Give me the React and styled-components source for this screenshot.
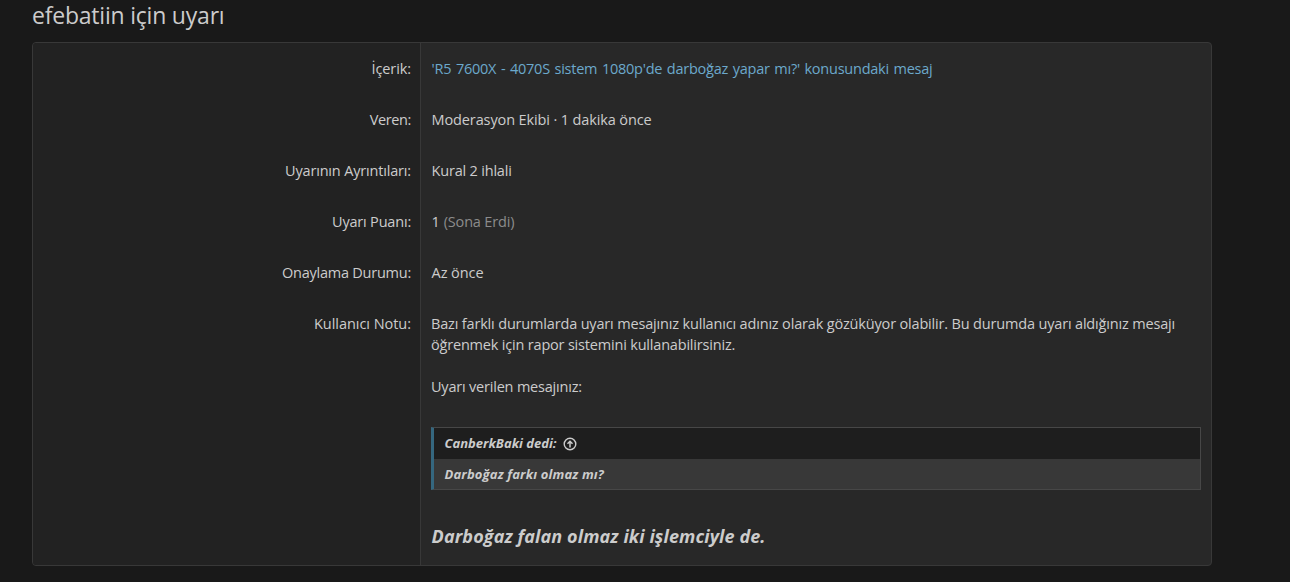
import styled, { createGlobalStyle } from "styled-components"

const GlobalStyle = createGlobalStyle`
  * {
    box-sizing: border-box;
  }
  body {
    margin: 0;
    background-color: #191919;
    color: #cccccc;
    font-family: "Segoe UI", "Open Sans", "Noto Sans", sans-serif;
    font-size: 14.5px;
    line-height: 21px;
  }
`

const Page = styled.main`
  width: 1290px;
  height: 582px;
  padding: 0 78px 0 32px;
  overflow: hidden;
`

const Title = styled.h1`
  height: 42px;
  margin: 0;
  font-size: 23px;
  font-weight: 400;
  line-height: 31px;
  letter-spacing: -0.21px;
`

const Block = styled.div`
  height: 524px;
  border: 1px solid #383838;
  border-radius: 4px;
  background-color: #282828;
  overflow: hidden;
`

const Pair = styled.dl`
  display: grid;
  grid-template-columns: 388px 1fr;
  margin: 0;
`

const Label = styled.dt`
  padding: 15px 9px 15px 15px;
  border-right: 1px solid #383838;
  background-color: #222222;
  text-align: right;
`

const Value = styled.dd`
  margin: 0;
  padding: 15px 10px;
`

const Line = styled.div`
  padding-left: 0.6px;
`

const Text = styled.span`
  letter-spacing: ${({ $spacing }) => $spacing || 0}px;
  white-space: nowrap;
`

const Muted = styled(Text)`
  color: #8c8c8c;
`

const Link = styled.a`
  color: #6ca9cc;
  letter-spacing: -0.24px;
  word-spacing: 1.1px;
  text-decoration: none;
`

const Note = styled.p`
  display: flex;
  flex-direction: column;
  margin: 0 0 21px;
`

const Quote = styled.blockquote`
  margin: 30px 0 32px;
  border: 1px solid #474747;
  border-left: 3px solid #35677f;
  background-color: #383838;
  font-size: 13px;
  font-style: italic;
  font-weight: 700;
`

const QuoteTitle = styled.div`
  display: flex;
  align-items: center;
  gap: 6px;
  height: 31px;
  padding: 0 10.5px;
  background-color: #1e1e1e;
`

const QuoteBody = styled.div`
  height: 30px;
  padding: 0 10.5px;
  line-height: 30px;
`

const Reply = styled.div`
  height: 29px;
  padding-left: 0.6px;
  font-size: 18px;
  font-style: italic;
  font-weight: 700;
  line-height: 28px;
`

function JumpIcon() {
  return (
    <svg width="14" height="14" viewBox="0 0 14 14" fill="none" stroke="#cccccc" strokeWidth="1.4">
      <circle cx="7" cy="7" r="5.8" />
      <path d="M7 10.4V4.4M4.5 6.7L7 4.2L9.5 6.7" strokeWidth="1.5" />
    </svg>
  )
}

function Row({ label, spacing, children }) {
  return (
    <Pair>
      <Label>
        <Text $spacing={spacing}>{label}</Text>
      </Label>
      <Value>{children}</Value>
    </Pair>
  )
}

function App() {
  return (
    <Page>
      <GlobalStyle />
      <Title>efebatiin için uyarı</Title>
      <Block>
        <Row label="İçerik:" spacing={-0.09}>
          <Line>
            <Link>'R5 7600X - 4070S sistem 1080p'de darboğaz yapar mı?' konusundaki mesaj</Link>
          </Line>
        </Row>
        <Row label="Veren:" spacing={-0.4}>
          <Line>
            <Text $spacing={-0.125}>Moderasyon Ekibi · 1 dakika önce</Text>
          </Line>
        </Row>
        <Row label="Uyarının Ayrıntıları:" spacing={-0.17}>
          <Line>
            <Text $spacing={-0.2}>Kural 2 ihlali</Text>
          </Line>
        </Row>
        <Row label="Uyarı Puanı:" spacing={-0.19}>
          <Line>
            1 <Muted $spacing={-0.16}>(Sona Erdi)</Muted>
          </Line>
        </Row>
        <Row label="Onaylama Durumu:" spacing={-0.24}>
          <Line>
            <Text $spacing={-0.07}>Az önce</Text>
          </Line>
        </Row>
        <Row label="Kullanıcı Notu:" spacing={-0.04}>
          <Note>
            <Text $spacing={-0.17}>
              Bazı farklı durumlarda uyarı mesajınız kullanıcı adınız olarak gözüküyor olabilir. Bu durumda uyarı aldığınız mesajı
            </Text>
            <Text $spacing={-0.19}>öğrenmek için rapor sistemini kullanabilirsiniz.</Text>
          </Note>
          <Text $spacing={-0.2}>Uyarı verilen mesajınız:</Text>
          <Quote>
            <QuoteTitle>
              <Text>CanberkBaki dedi:</Text>
              <JumpIcon />
            </QuoteTitle>
            <QuoteBody>
              <Text $spacing={0.15}>Darboğaz farkı olmaz mı?</Text>
            </QuoteBody>
          </Quote>
          <Reply>
            <Text $spacing={0.1}>Darboğaz falan olmaz iki işlemciyle de.</Text>
          </Reply>
        </Row>
      </Block>
    </Page>
  )
}

export default App
